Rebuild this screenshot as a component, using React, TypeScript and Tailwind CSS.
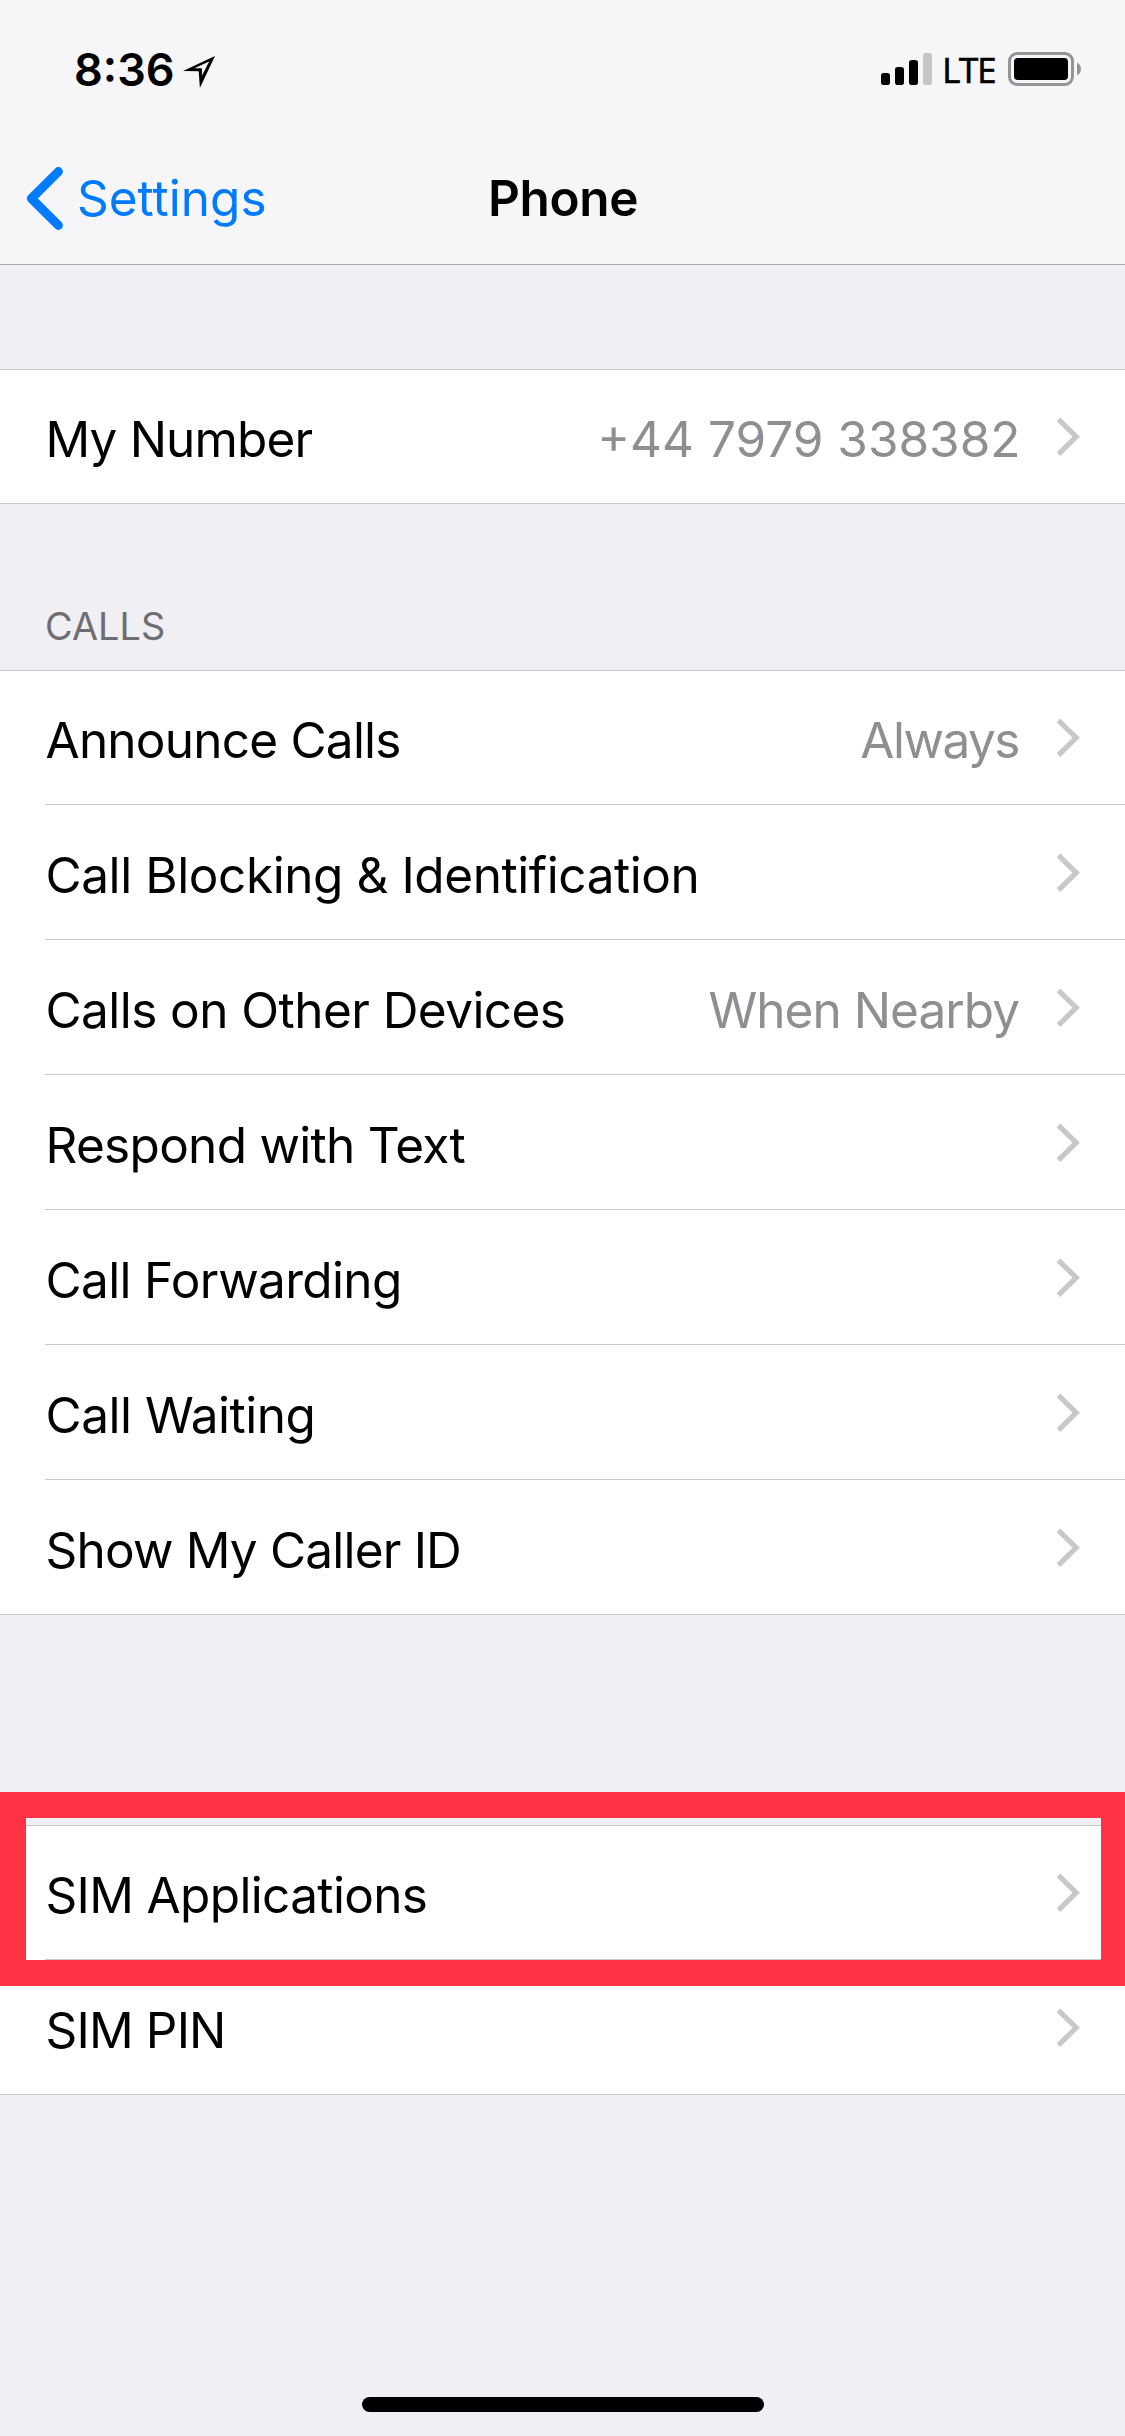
type RowData = { label: string; tracking: string; value?: string; valueClass?: string };

const myNumber: RowData[] = [
  { label: 'My Number', tracking: 'tracking-[-0.85px]', value: '+44 7979 338382', valueClass: 'mr-[35.5px]' },
];

const calls: RowData[] = [
  { label: 'Announce Calls', tracking: 'tracking-[-0.77px]', value: 'Always', valueClass: 'mr-[37px] tracking-[-1.5px]' },
  { label: 'Call Blocking & Identification', tracking: 'tracking-[-0.42px]' },
  { label: 'Calls on Other Devices', tracking: 'tracking-[-0.56px]', value: 'When Nearby', valueClass: 'mr-[37px] tracking-[-0.95px]' },
  { label: 'Respond with Text', tracking: 'tracking-[-0.7px]' },
  { label: 'Call Forwarding', tracking: 'tracking-[-0.65px]' },
  { label: 'Call Waiting', tracking: 'tracking-[-0.48px]' },
  { label: 'Show My Caller ID', tracking: 'tracking-[-0.81px]' },
];

const sim: RowData[] = [
  { label: 'SIM Applications', tracking: 'tracking-[-0.65px]' },
  { label: 'SIM PIN', tracking: 'tracking-[-0.83px]' },
];

function Chevron() {
  return (
    <svg className="mr-11 mt-12 h-10 w-[25px] shrink-0" viewBox="0 0 25 40" fill="none">
      <path d="M2.5 2.3 20.2 19.7 2.5 37.1" stroke="#c7c7cc" strokeWidth="5.2" />
    </svg>
  );
}

function Row({ label, tracking, value, valueClass }: RowData) {
  return (
    <li className="group pl-[45px]">
      <div className="flex h-[135px] items-start border-b border-[#c8c7cc] group-last:h-[134px] group-last:border-b-0">
        <span className={`mt-10 flex-1 whitespace-nowrap pl-[0.5px] text-black ${tracking}`}>{label}</span>
        {value && <span className={`mt-10 whitespace-nowrap text-[#8e8e93] ${valueClass ?? ''}`}>{value}</span>}
        <Chevron />
      </div>
    </li>
  );
}

function Group({ rows }: { rows: RowData[] }) {
  return (
    <ul className="border-b border-[#c8c7cc] bg-white text-[49.5px] leading-[60px] shadow-[inset_0_1px_0_#c8c7cc]">
      {rows.map((r) => (
        <Row key={r.label} {...r} />
      ))}
    </ul>
  );
}

function StatusBar() {
  return (
    <div className="flex h-[132px] items-start pl-[74px] pr-11">
      <span className="mt-[42px] w-[101px] text-[45px] font-semibold leading-[56px] text-black">8:36</span>
      <svg className="ml-2 mt-14 h-8 w-[32px]" viewBox="0 0 32 32">
        <path fillRule="evenodd" d="M0 14.9 32 0 16.9 32 15.7 15.2ZM11.4 12.2H18.9V19.8L26.2 5.4Z" />
      </svg>
      <div className="flex-1" />
      <svg className="mt-[53px] h-8 w-[51px]" viewBox="0 0 51 32">
        <rect x="0" y="20" width="9" height="12" rx="2.8" />
        <rect x="14" y="14" width="9" height="18" rx="2.8" />
        <rect x="28" y="7" width="9" height="25" rx="2.8" />
        <rect x="42" y="0" width="9" height="32" rx="2.8" fill="#c5c5c7" />
      </svg>
      <span className="ml-[10px] mt-12 w-[66px] font-['Noto_Sans',sans-serif] text-[35.4px] leading-[42px] tracking-[-1.2px] text-black [-webkit-text-stroke:0.4px_black]">LTE</span>
      <svg className="mt-[52px] h-[34px] w-[73px]" viewBox="0 0 73 34">
        <rect x="1.5" y="1.5" width="63" height="31" rx="7.5" fill="none" stroke="#949496" strokeWidth="3" />
        <rect x="6" y="6" width="54" height="22" rx="3.8" />
        <path d="M69 10.7C71.7 11.8 73 14.3 73 17S71.7 22.2 69 23.3Z" fill="#949496" />
      </svg>
    </div>
  );
}

export default function App() {
  return (
    <main className="flex h-[2436px] w-[1125px] flex-col overflow-hidden bg-[#efeff4] font-['Inter',sans-serif]">
      <header className="border-b border-[#a9a9ad] bg-[#f6f6f8]">
        <StatusBar />
        <nav className="grid h-[132px] grid-cols-3 items-start text-[49.5px] leading-[60px]">
          <a className="flex items-start pl-6 text-[#007aff]">
            <svg className="mt-[34px] h-[66px] w-[42px]" viewBox="0 0 42 66" fill="none">
              <path d="M34.4 5.6 7.4 32.5 34.4 59.4" stroke="#007aff" strokeWidth="9" strokeLinecap="round" strokeLinejoin="round" />
            </svg>
            <span className="ml-[11px] mt-9">Settings</span>
          </a>
          <h1 className="mt-9 pl-px text-center font-semibold tracking-[-0.35px] text-black">Phone</h1>
        </nav>
      </header>

      <section className="mt-[104px]">
        <Group rows={myNumber} />
      </section>

      <section>
        <h2 className="h-[166px] pl-[45px] pt-[99px] text-[37.8px] leading-[46px] tracking-[0.08px] text-[#6d6d72]">CALLS</h2>
        <Group rows={calls} />
      </section>

      <section className="relative mt-[210px]">
        <Group rows={sim} />
        <div className="absolute inset-x-0 -top-[33px] h-[194px] border-[26px] border-r-[24px] border-[#ff3343]" />
      </section>

      <div className="mx-auto mb-6 mt-auto h-[15px] w-[402px] rounded-full bg-black" />
    </main>
  );
}
